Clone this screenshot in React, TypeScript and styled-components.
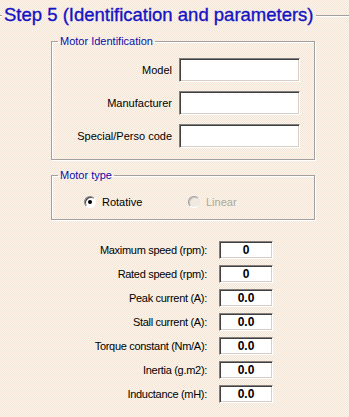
import React from "react";
import styled, { createGlobalStyle } from "styled-components";

const Global = createGlobalStyle`
  html, body { margin: 0; padding: 0; }
  body {
    width: 349px;
    height: 417px;
    overflow: hidden;
    background: repeating-conic-gradient(#fcf5ec 0 25%, #f4e5d6 0 50%) 0 0 / 2px 2px;
    font-family: "Liberation Sans", Arial, sans-serif;
  }
`;

const Page = styled.div`
  width: 349px;
  height: 417px;
  display: flex;
  flex-direction: column;
`;

const TitleRow = styled.div`
  height: 30px;
  display: flex;
  align-items: center;
  gap: 2px;
`;

const Rule = styled.div<{ $grow?: boolean }>`
  height: 1px;
  background: #a0a0a0;
  border-bottom: 1px solid #ffffff;
  width: ${(p) => (p.$grow ? "auto" : "2px")};
  flex: ${(p) => (p.$grow ? "1" : "none")};
  margin-top: 1px;
`;

const Title = styled.h1`
  margin: 0;
  font-size: 18.5px;
  font-weight: normal;
  color: #1414c4;
  -webkit-text-stroke: 0.35px #1414c4;
  white-space: nowrap;
`;

const Group = styled.fieldset<{ $top: number }>`
  margin: ${(p) => p.$top}px 0 0 51px;
  width: 264px;
  box-sizing: border-box;
  padding: 0;
  border: 1px solid #a0a0a0;
  box-shadow: inset 1px 1px #ffffff, 1px 1px #ffffff;
  min-width: 0;
`;

const Legend = styled.legend`
  margin-left: 6px;
  padding: 0 2px 0 2px;
  font-size: 11px;
  line-height: 13px;
  color: #0c0ca8;
`;

const IdGrid = styled.div`
  display: grid;
  grid-template-columns: 1fr 121px;
  column-gap: 7px;
  row-gap: 9px;
  align-items: center;
  padding: 10px 14px 11px 0;
`;

const Label = styled.label<{ $tight?: boolean }>`
  font-size: 11px;
  color: #000;
  text-align: right;
  white-space: nowrap;
  letter-spacing: ${(p) => (p.$tight ? "-0.3px" : "0")};
`;

const Sunken = styled.div<{ $h: number }>`
  height: ${(p) => p.$h}px;
  box-sizing: border-box;
  background: #ffffff;
  border-top: 1px solid #808080;
  border-left: 1px solid #808080;
  border-right: 1px solid #ffffff;
  border-bottom: 1px solid #ffffff;
  box-shadow: inset 1px 1px #404040, inset -1px -1px #d4d0c8;
  display: flex;
  align-items: center;
  justify-content: center;
  font-size: 12px;
  font-weight: bold;
  color: #000;
`;

const RadioRow = styled.div`
  display: flex;
  align-items: center;
  padding: 13px 0 11px 32px;
  height: 13px;
`;

const RadioItem = styled.div<{ $disabled?: boolean; $w: number }>`
  display: flex;
  align-items: center;
  gap: 6px;
  width: ${(p) => p.$w}px;
  font-size: 11px;
  color: ${(p) => (p.$disabled ? "#aca899" : "#000")};
`;

const Circle = styled.span<{ $checked?: boolean; $disabled?: boolean }>`
  width: 12px;
  height: 12px;
  position: relative;
  display: inline-block;
  border-radius: 50%;
  box-sizing: border-box;
  background: ${(p) => (p.$disabled ? "#f0e9e0" : "#ffffff")};
  border: 1px solid;
  border-color: ${(p) =>
    p.$disabled ? "#9a9a9a #e8e8e8 #ffffff #9a9a9a" : "#808080 #ffffff #ffffff #808080"};
  box-shadow: inset 1px 1px ${(p) => (p.$disabled ? "#c8c8c8" : "#404040")};
  &::after {
    content: "";
    display: ${(p) => (p.$checked ? "block" : "none")};
    position: absolute;
    left: 3px;
    top: 3px;
    width: 4px;
    height: 4px;
    border-radius: 50%;
    background: #000;
  }
`;

const ParamGrid = styled.div`
  display: grid;
  grid-template-columns: 207px 54px;
  column-gap: 12px;
  row-gap: 6px;
  align-items: center;
  margin-top: 21px;
`;

const idRows = ["Model", "Manufacturer", "Special/Perso code"];
const params: [string, string][] = [
  ["Maximum speed (rpm):", "0"],
  ["Rated speed (rpm):", "0"],
  ["Peak current (A):", "0.0"],
  ["Stall current (A):", "0.0"],
  ["Torque constant (Nm/A):", "0.0"],
  ["Inertia (g.m2):", "0.0"],
  ["Inductance (mH):", "0.0"],
];

export default function App() {
  return (
    <Page>
      <Global />
      <TitleRow>
        <Rule />
        <Title>Step 5 (Identification and parameters)</Title>
        <Rule $grow />
      </TitleRow>
      <Group $top={5}>
        <Legend>Motor Identification</Legend>
        <IdGrid>
          {idRows.map((r) => (
            <React.Fragment key={r}>
              <Label>{r}</Label>
              <Sunken $h={24} />
            </React.Fragment>
          ))}
        </IdGrid>
      </Group>
      <Group $top={9}>
        <Legend>Motor type</Legend>
        <RadioRow>
          <RadioItem $w={104}>
            <Circle $checked />
            Rotative
          </RadioItem>
          <RadioItem $w={80} $disabled>
            <Circle $disabled />
            Linear
          </RadioItem>
        </RadioRow>
      </Group>
      <ParamGrid>
        {params.map(([l, v]) => (
          <React.Fragment key={l}>
            <Label $tight>{l}</Label>
            <Sunken $h={18}>{v}</Sunken>
          </React.Fragment>
        ))}
      </ParamGrid>
    </Page>
  );
}
